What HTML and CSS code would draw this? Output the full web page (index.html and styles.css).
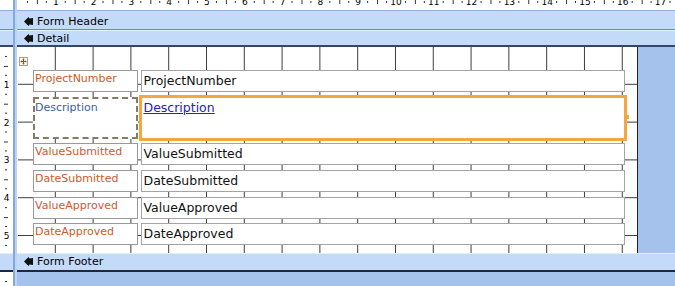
FILE: index.html
```html
<!DOCTYPE html>
<html>
<head>
  <meta charset="UTF-8">
  <title>Form Design</title>
  <link rel="stylesheet" href="styles.css">
</head>
<body>
  <div class="designer">
    <div class="corner"></div>
    <div class="vbar"></div>
    <div class="ruler-top">
      <div class="nums">
        <span>1</span><span>2</span><span>3</span><span>4</span><span>5</span><span>6</span>
        <span>7</span><span>8</span><span>9</span><span>10</span><span>11</span><span>12</span>
        <span>13</span><span>14</span><span>15</span><span>16</span><span>17</span>
      </div>
    </div>

    <div class="selector hdr"></div>
    <div class="bar hdr">
      <svg class="bar-icon" width="9" height="9" viewBox="0 0 9 9"><path d="M0 4.5 L4.5 0 L5.5 1.5 L9 1 L9 8 L5.5 7.5 L4.5 9 Z" fill="#111"/></svg>
      Form Header
    </div>

    <div class="selector det"></div>
    <div class="bar det">
      <svg class="bar-icon" width="9" height="9" viewBox="0 0 9 9"><path d="M0 4.5 L4.5 0 L5.5 1.5 L9 1 L9 8 L5.5 7.5 L4.5 9 Z" fill="#111"/></svg>
      Detail
    </div>

    <div class="ruler-left">
      <span>1</span><span>2</span><span>3</span><span>4</span><span>5</span>
    </div>
    <div class="section-row">
      <div class="section">
        <svg class="move-grip" width="9" height="9" viewBox="0 0 9 9">
          <rect x="0.5" y="0.5" width="8" height="8" fill="#fbf8f0" stroke="#b39f7c"/>
          <path d="M4.5 2v5M2 4.5h5" stroke="#6e5d42"/>
          <path d="M4.5 1.3l-1.3 1.3h2.6zM4.5 7.7l-1.3-1.3h2.6zM1.3 4.5l1.3-1.3v2.6zM7.7 4.5l-1.3-1.3v2.6z" fill="#6e5d42"/>
        </svg>
        <div class="fields">
          <div class="row">
            <div class="label">ProjectNumber</div>
            <div class="box">ProjectNumber</div>
          </div>
          <div class="row tall">
            <div class="label link">Description</div>
            <div class="box focus"><a href="#">Description</a><span class="grip"></span></div>
          </div>
          <div class="row">
            <div class="label">ValueSubmitted</div>
            <div class="box">ValueSubmitted</div>
          </div>
          <div class="row">
            <div class="label">DateSubmitted</div>
            <div class="box">DateSubmitted</div>
          </div>
          <div class="row">
            <div class="label">ValueApproved</div>
            <div class="box">ValueApproved</div>
          </div>
          <div class="row">
            <div class="label">DateApproved</div>
            <div class="box">DateApproved</div>
          </div>
        </div>
      </div>
      <div class="sidefill"></div>
    </div>

    <div class="selector ftr"></div>
    <div class="bar ftr">
      <svg class="bar-icon" width="9" height="9" viewBox="0 0 9 9"><path d="M0 4.5 L4.5 0 L5.5 1.5 L9 1 L9 8 L5.5 7.5 L4.5 9 Z" fill="#111"/></svg>
      Form Footer
    </div>

    <div class="ruler-left tail"></div>
    <div class="backdrop"></div>
  </div>
</body>
</html>
```

FILE: styles.css
```css
body {
  margin: 0;
  width: 675px;
  height: 286px;
  overflow: hidden;
  background: #fff;
  font-family: "DejaVu Sans", sans-serif;
}

.designer {
  display: grid;
  grid-template-columns: 13px 4px 1fr;
  grid-template-rows: 11px 19px 17px 206px 19px 1fr;
  height: 286px;
}

.vbar {
  grid-column: 2;
  grid-row: 1 / -1;
  box-sizing: border-box;
  background: #bcd3f5;
  border-left: 2px solid #87a6da;
}

.corner {
  background: #fff;
  border-bottom: 1px solid #8fb0e0;
}

/* rulers */
.ruler-top {
  overflow: hidden;
  box-sizing: border-box;
  border-bottom: 1px solid #8fb0e0;
  background-color: #fff;
  background-image:
    linear-gradient(to right, transparent 9px, #333 9px 10px, transparent 10px 28px, #333 28px 29px, transparent 29px),
    linear-gradient(to right, transparent 18.5px, #333 18.5px 19.5px, transparent 19.5px);
  background-size: 37.8px 2px, 37.8px 4px;
  background-position: 1px 1px, 1px 0;
  background-repeat: repeat-x;
}

.ruler-top .nums {
  display: flex;
  padding-left: 19.9px;
  margin-top: -2px;
}

.ruler-top .nums span {
  flex: none;
  width: 37.8px;
  text-align: center;
  font-size: 9px;
  line-height: 9px;
  color: #000;
}

.ruler-left {
  display: flex;
  flex-direction: column;
  overflow: hidden;
  padding-top: 18.9px;
  background-color: #fff;
  background-image:
    linear-gradient(to bottom, transparent 9px, #333 9px 10px, transparent 10px 28px, #333 28px 29px, transparent 29px),
    linear-gradient(to bottom, transparent 18.5px, #333 18.5px 19.5px, transparent 19.5px);
  background-size: 2px 37.8px, 4px 37.8px;
  background-position: 5px 0, 4px 0;
  background-repeat: repeat-y;
}

.ruler-left span {
  flex: none;
  height: 37.8px;
  display: flex;
  align-items: center;
  justify-content: center;
  font-size: 9px;
  color: #000;
}

/* section bars */
.selector,
.bar {
  box-sizing: border-box;
  background: #c4daf9;
}

.bar {
  display: flex;
  align-items: flex-start;
  padding-left: 7px;
  font-size: 11px;
  line-height: 14px;
  color: #000;
}

.bar-icon {
  flex: none;
  margin: 2px 4px 0 0;
}

.hdr {
  border-bottom: 1px solid #6f89b6;
  padding-top: 4px;
}

.det {
  border-top: 1px solid #e4eefc;
  border-bottom: 2px solid #33476b;
  padding-top: 1px;
}

.ftr {
  border-top: 1px solid #e4eefc;
  border-bottom: 2px solid #1e2638;
  padding-top: 1px;
}

/* detail section */
.section-row {
  display: flex;
}

.section {
  position: relative;
  flex: none;
  width: 620px;
  margin-left: 1px;
  box-sizing: border-box;
  border-right: 1px solid #222;
  background-color: #fff;
  background-image:
    linear-gradient(to right, transparent 36.8px, #3c3c3c 36.8px),
    linear-gradient(to bottom, transparent 36.8px, #3c3c3c 36.8px);
  background-size: 37.8px 37.8px;
}

.sidefill,
.backdrop {
  flex: 1;
  background: #a4c2ec;
}

.move-grip {
  position: absolute;
  left: 1px;
  top: 10px;
}

.fields {
  display: flex;
  flex-direction: column;
  gap: 4.7px;
  padding: 23px 0 0 15px;
}

.row {
  display: flex;
  gap: 3px;
  height: 22px;
}

.row.tall {
  height: 42px;
}

.label {
  width: 105px;
  box-sizing: border-box;
  border: 1px solid #9a9a9a;
  background: #fff;
  padding: 1px 0 0 1px;
  font-size: 11px;
  line-height: 13px;
  color: #d0592b;
}

.label.link {
  border: 2px dashed #85796a;
  padding: 2px 0 0 0;
  color: #3d5c9e;
}

.box {
  position: relative;
  width: 484px;
  box-sizing: border-box;
  border: 1px solid #a4a4a4;
  background: #fff;
  padding: 2px 0 0 1.5px;
  font-size: 12.5px;
  line-height: 15px;
  color: #111;
}

.box.focus {
  outline: 3px solid #f5a73f;
  outline-offset: -1px;
}

.box.focus a {
  color: #2323b5;
  text-decoration: underline;
}

.grip {
  position: absolute;
  right: -5px;
  top: 17px;
  width: 3px;
  height: 4px;
  background: #f5a73f;
}
```
